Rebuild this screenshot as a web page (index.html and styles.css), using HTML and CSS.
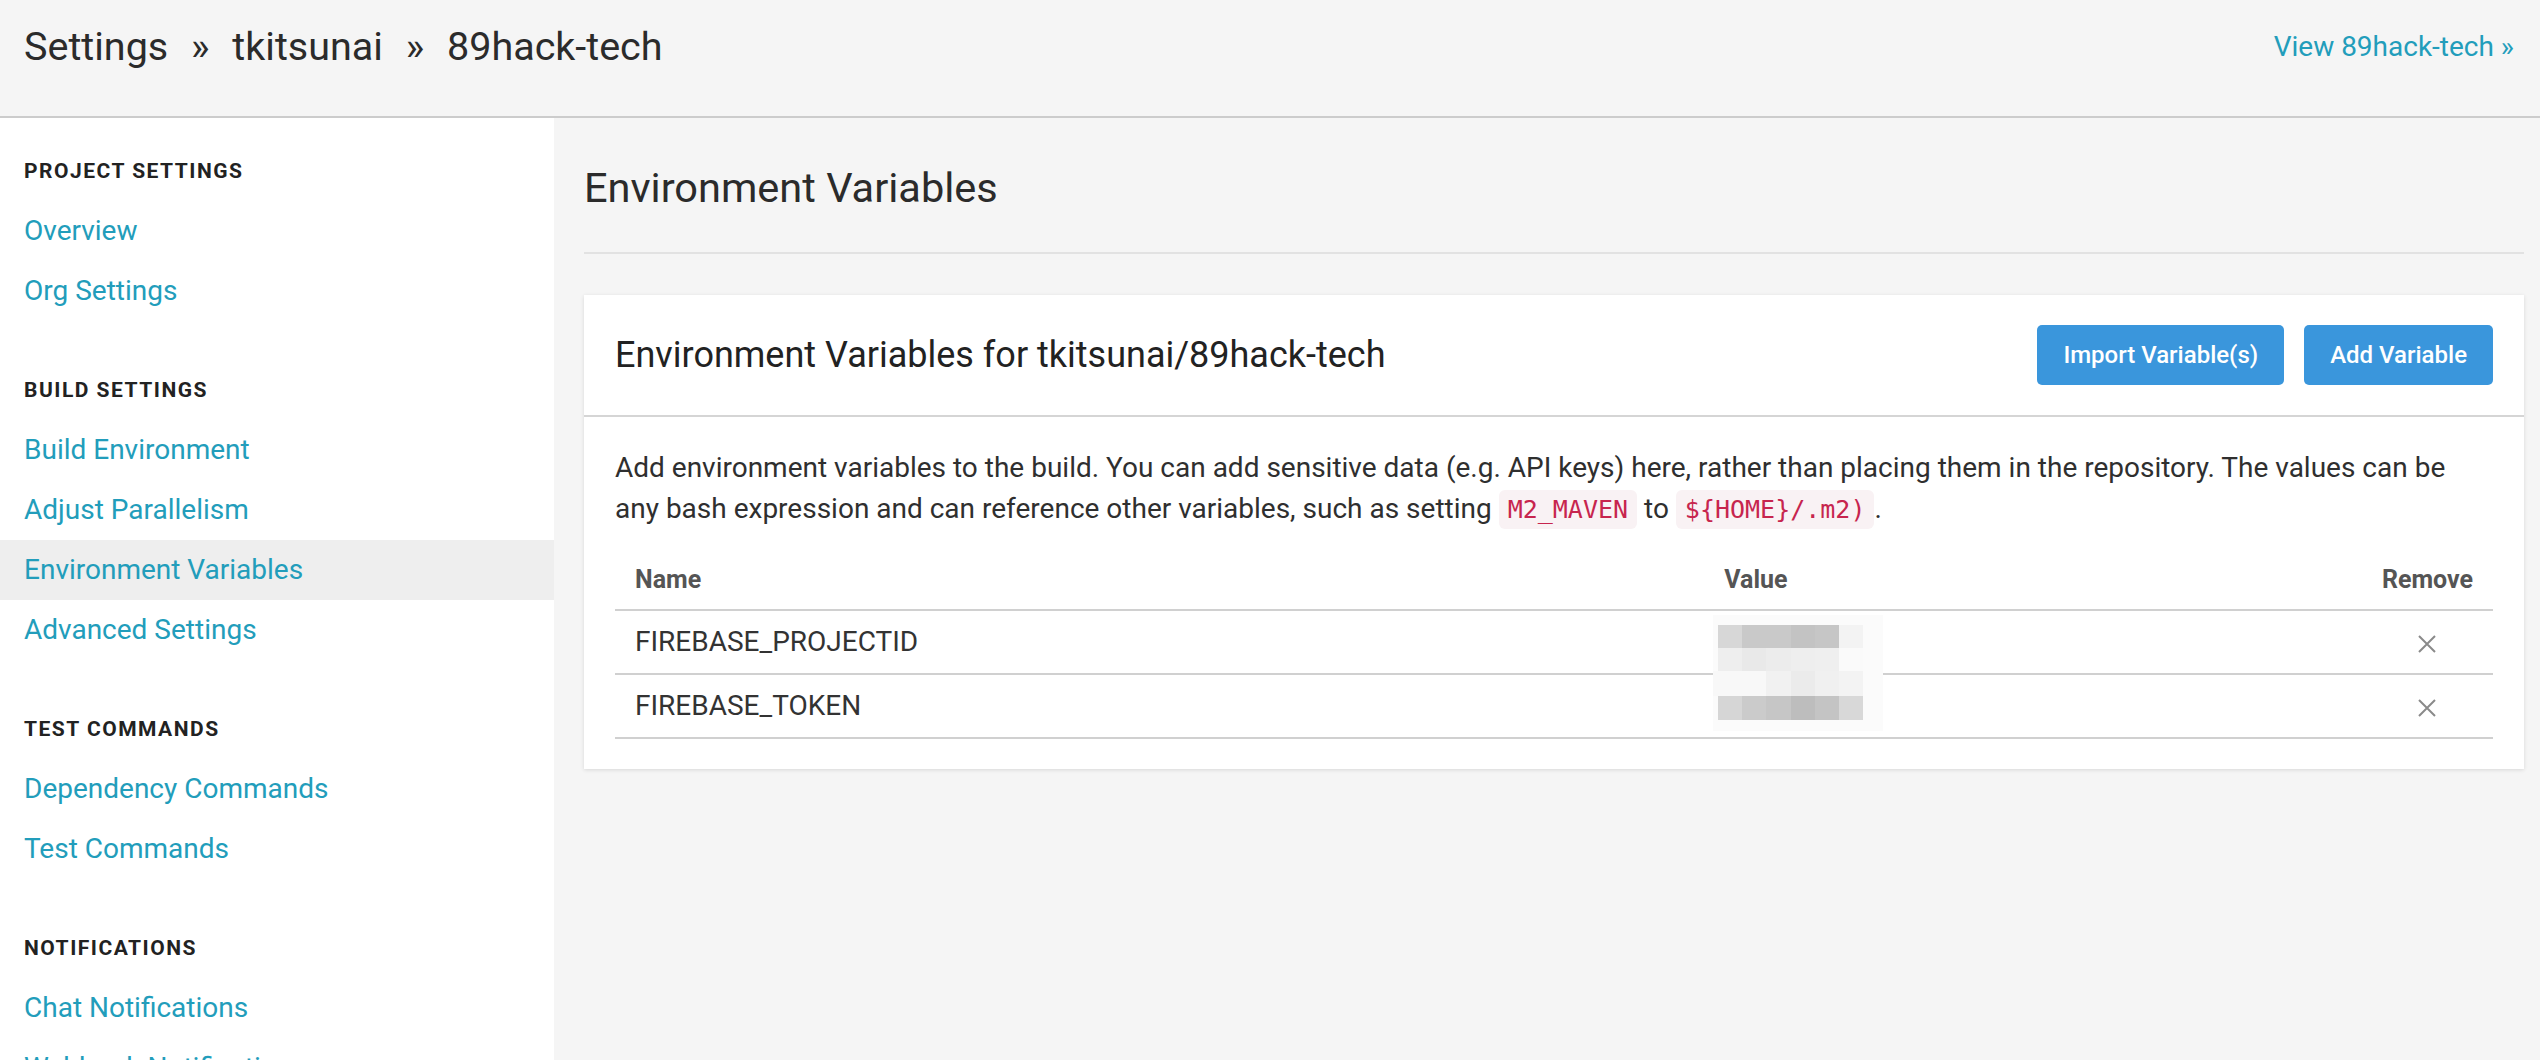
FILE: index.html
```html
<!DOCTYPE html>
<html lang="en">
<head>
<meta charset="utf-8">
<title>Settings » tkitsunai » 89hack-tech</title>
<link rel="stylesheet" href="styles.css">
</head>
<body>
<header class="topbar">
  <div class="crumbs">Settings <span class="sep">»</span> tkitsunai <span class="sep">»</span> 89hack-tech</div>
  <a class="view-link" href="#">View 89hack-tech »</a>
</header>
<div class="layout">
  <nav class="sidebar">
    <section class="nav-section">
      <h4 class="nav-heading">Project Settings</h4>
      <a class="nav-link" href="#">Overview</a>
      <a class="nav-link" href="#">Org Settings</a>
    </section>
    <section class="nav-section">
      <h4 class="nav-heading">Build Settings</h4>
      <a class="nav-link" href="#">Build Environment</a>
      <a class="nav-link" href="#">Adjust Parallelism</a>
      <a class="nav-link active" href="#">Environment Variables</a>
      <a class="nav-link" href="#">Advanced Settings</a>
    </section>
    <section class="nav-section">
      <h4 class="nav-heading">Test Commands</h4>
      <a class="nav-link" href="#">Dependency Commands</a>
      <a class="nav-link" href="#">Test Commands</a>
    </section>
    <section class="nav-section">
      <h4 class="nav-heading">Notifications</h4>
      <a class="nav-link" href="#">Chat Notifications</a>
      <a class="nav-link" href="#">Webhook Notifications</a>
    </section>
  </nav>
  <main class="main">
    <h1 class="page-title">Environment Variables</h1>
    <div class="card">
      <div class="card-header">
        <h2 class="card-title">Environment Variables for tkitsunai/89hack-tech</h2>
        <div class="actions">
          <button class="btn btn-import">Import Variable(s)</button>
          <button class="btn btn-add">Add Variable</button>
        </div>
      </div>
      <div class="card-body">
        <p class="intro">Add environment variables to the build. You can add sensitive data (e.g. API keys) here, rather than placing them in the repository. The values can be any bash expression and can reference other variables, such as setting <code>M2_MAVEN</code> to <code>${HOME}/.m2)</code>.</p>
        <table class="vars">
          <thead>
            <tr>
              <th class="col-name">Name</th>
              <th class="col-value">Value</th>
              <th class="col-remove">Remove</th>
            </tr>
          </thead>
          <tbody>
            <tr>
              <td>FIREBASE_PROJECTID</td>
              <td class="value-cell">
                <svg class="mosaic" width="170" height="116" viewBox="0 0 170 116" aria-hidden="true">
                  <rect x="0" y="0" width="170" height="116" fill="#fbfbfb"/>
                  <rect x="5" y="10" width="24" height="23" fill="#d7d7d7"/>
                  <rect x="29" y="10" width="24" height="23" fill="#c9c9c9"/>
                  <rect x="53" y="10" width="25" height="23" fill="#c9c9c9"/>
                  <rect x="78" y="10" width="24" height="23" fill="#c3c3c3"/>
                  <rect x="102" y="10" width="24" height="23" fill="#c6c6c6"/>
                  <rect x="126" y="10" width="24" height="23" fill="#f3f3f3"/>
                  <rect x="5" y="33" width="24" height="23" fill="#eeeeee"/>
                  <rect x="29" y="33" width="24" height="23" fill="#e9e9e9"/>
                  <rect x="53" y="33" width="25" height="23" fill="#ececec"/>
                  <rect x="78" y="33" width="24" height="23" fill="#eeeeee"/>
                  <rect x="102" y="33" width="24" height="23" fill="#efefef"/>
                  <rect x="126" y="33" width="24" height="23" fill="#fafafa"/>
                  <rect x="0" y="56" width="53" height="25" fill="#f8f8f8"/>
                  <rect x="53" y="56" width="25" height="25" fill="#f1f1f1"/>
                  <rect x="78" y="56" width="24" height="25" fill="#ebebeb"/>
                  <rect x="102" y="56" width="24" height="25" fill="#f0f0f0"/>
                  <rect x="126" y="56" width="24" height="25" fill="#f3f3f3"/>
                  <rect x="5" y="81" width="24" height="24" fill="#d6d6d6"/>
                  <rect x="29" y="81" width="24" height="24" fill="#cbcbcb"/>
                  <rect x="53" y="81" width="25" height="24" fill="#c6c6c6"/>
                  <rect x="78" y="81" width="24" height="24" fill="#bdbdbd"/>
                  <rect x="102" y="81" width="24" height="24" fill="#c4c4c4"/>
                  <rect x="126" y="81" width="24" height="24" fill="#d8d8d8"/>
                </svg>
              </td>
              <td class="remove-cell">
                <svg class="x-icon" width="20" height="18" viewBox="0 0 20 18" aria-hidden="true"><path d="M2 1 L18 17 M18 1 L2 17" stroke="#8a8a8a" stroke-width="2" fill="none"/></svg>
              </td>
            </tr>
            <tr>
              <td>FIREBASE_TOKEN</td>
              <td class="value-cell"></td>
              <td class="remove-cell">
                <svg class="x-icon" width="20" height="18" viewBox="0 0 20 18" aria-hidden="true"><path d="M2 1 L18 17 M18 1 L2 17" stroke="#8a8a8a" stroke-width="2" fill="none"/></svg>
              </td>
            </tr>
          </tbody>
        </table>
      </div>
    </div>
  </main>
</div>
</body>
</html>
```

FILE: styles.css
```css
* { box-sizing: border-box; }

html, body {
  margin: 0;
  padding: 0;
  height: 100%;
  overflow: hidden;
}

body {
  font-family: Roboto, "Noto Sans", "Liberation Sans", sans-serif;
  background: #f5f5f5;
  color: #333;
}

a { text-decoration: none; }

.topbar {
  height: 118px;
  display: flex;
  justify-content: space-between;
  align-items: flex-start;
  padding: 0 26px 0 24px;
  background: #f5f5f5;
  border-bottom: 2px solid #cccccc;
}

.crumbs {
  margin-top: 24px;
  font-size: 39.5px;
  line-height: 46px;
  font-weight: 400;
  color: #2b2b2b;
}

.crumbs .sep {
  margin: 0 13px;
}

.view-link {
  margin-top: 30px;
  font-size: 28px;
  line-height: 34px;
  color: #229dbb;
}

.layout {
  display: flex;
  height: calc(100% - 118px);
}

.sidebar {
  width: 554px;
  flex: 0 0 554px;
  background: #ffffff;
  padding-top: 41px;
}

.nav-section {
  margin-bottom: 57px;
}

.nav-heading {
  margin: 0 0 18px;
  padding-left: 24px;
  font-size: 21px;
  line-height: 24px;
  font-weight: 700;
  letter-spacing: 1.5px;
  text-transform: uppercase;
  color: #222;
}

.nav-link {
  display: block;
  padding-left: 24px;
  font-size: 28px;
  line-height: 60px;
  color: #229dbb;
}

.nav-link.active {
  background: #eeeeee;
}

.main {
  flex: 1;
  padding: 46px 16px 0 30px;
  background: #f5f5f5;
}

.page-title {
  margin: 0;
  padding-bottom: 40px;
  font-size: 41.5px;
  line-height: 48px;
  font-weight: 400;
  color: #2b2b2b;
  border-bottom: 2px solid #e2e2e2;
}

.card {
  margin-top: 41px;
  background: #ffffff;
  box-shadow: 0 1px 4px rgba(0, 0, 0, 0.12);
}

.card-header {
  display: flex;
  justify-content: space-between;
  align-items: center;
  padding: 30px 31px;
  border-bottom: 2px solid #d5d5d5;
}

.card-title {
  margin: 0;
  font-size: 36px;
  line-height: 42px;
  font-weight: 400;
  color: #222;
}

.actions {
  display: flex;
  gap: 20px;
}

.btn {
  height: 60px;
  padding: 0 26px;
  border: none;
  border-radius: 5px;
  background: #3a96dc;
  color: #ffffff;
  font-family: Roboto, "Noto Sans", sans-serif;
  font-size: 24px;
  font-weight: 500;
  cursor: pointer;
}

.card-body {
  padding: 30px 31px 30px 31px;
}

.intro {
  margin: 0 0 20px;
  font-size: 28px;
  line-height: 41px;
  color: #2f2f2f;
}

.intro code {
  display: inline-block;
  font-family: "DejaVu Sans Mono", "Liberation Mono", monospace;
  font-size: 25px;
  line-height: 29px;
  padding: 5px 9px;
  border-radius: 6px;
  background: #f9f2f4;
  color: #c7254e;
}

.vars {
  width: 100%;
  border-collapse: collapse;
}

.vars th {
  padding: 16px 20px 14px;
  font-size: 25px;
  line-height: 30px;
  font-weight: 700;
  color: #555;
  text-align: left;
  border-bottom: 2px solid #d0d0d0;
}

.vars td {
  padding: 16px 20px;
  font-size: 28px;
  line-height: 30px;
  color: #333;
  border-bottom: 2px solid #d0d0d0;
}

.vars .col-name { width: 58%; }
.vars .col-remove { width: 1%; text-align: center; white-space: nowrap; }

.value-cell {
  position: relative;
}

.mosaic {
  position: absolute;
  left: 9px;
  top: 4px;
  display: block;
}

.remove-cell {
  text-align: center;
}

.x-icon {
  display: inline-block;
  vertical-align: middle;
}
```
